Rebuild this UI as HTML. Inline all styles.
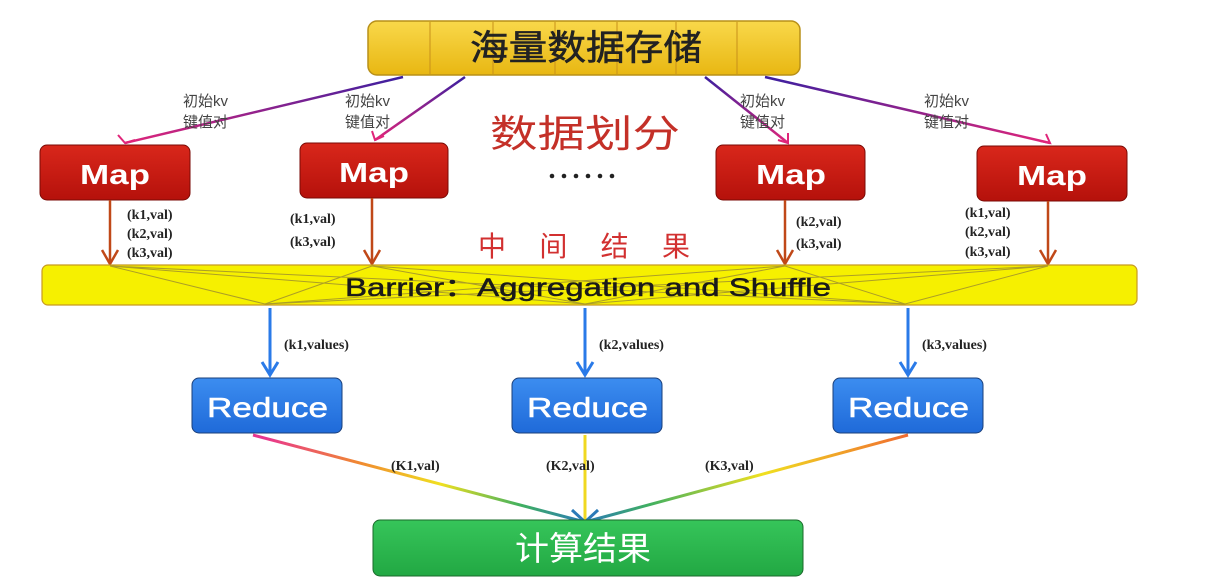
<!DOCTYPE html>
<html><head><meta charset="utf-8"><style>
html,body{margin:0;padding:0;background:#fff;width:1226px;height:588px;overflow:hidden}
text{font-family:"Liberation Sans","Noto Sans CJK SC",sans-serif}
.kv text{font-family:"Liberation Serif",serif;font-weight:bold;font-size:14px;fill:#222}
.lab text{font-size:15px;fill:#444}
</style></head><body>
<svg width="1226" height="588" viewBox="0 0 1226 588" xmlns="http://www.w3.org/2000/svg">
<defs>
<linearGradient id="gold" x1="0" y1="0" x2="0" y2="1"><stop offset="0" stop-color="#f9d84a"/><stop offset="1" stop-color="#e8b712"/></linearGradient>
<linearGradient id="red" x1="0" y1="0" x2="0" y2="1"><stop offset="0" stop-color="#d9271b"/><stop offset="1" stop-color="#b5110b"/></linearGradient>
<linearGradient id="blue" x1="0" y1="0" x2="0" y2="1"><stop offset="0" stop-color="#3c8df0"/><stop offset="1" stop-color="#1f6ad9"/></linearGradient>
<linearGradient id="green" x1="0" y1="0" x2="0" y2="1"><stop offset="0" stop-color="#36c55a"/><stop offset="1" stop-color="#22a843"/></linearGradient>
<linearGradient id="pp" x1="0" y1="0" x2="0" y2="1"><stop offset="0" stop-color="#3b1fa0"/><stop offset="1" stop-color="#e0257a"/></linearGradient>
<linearGradient id="rb1" gradientUnits="userSpaceOnUse" x1="265" y1="435" x2="585" y2="522"><stop offset="0" stop-color="#e8358f"/><stop offset="0.3" stop-color="#f08a30"/><stop offset="0.55" stop-color="#f0e020"/><stop offset="0.8" stop-color="#40b060"/><stop offset="1" stop-color="#2a7ab8"/></linearGradient>
<linearGradient id="rb3" gradientUnits="userSpaceOnUse" x1="908" y1="435" x2="585" y2="522"><stop offset="0" stop-color="#f06a30"/><stop offset="0.45" stop-color="#f0e020"/><stop offset="0.8" stop-color="#40b060"/><stop offset="1" stop-color="#2a7ab8"/></linearGradient>
</defs>

<rect x="368" y="21" width="432" height="54" rx="9" fill="url(#gold)" stroke="#b89018" stroke-width="1.5"/>
<g stroke="#c8901a" stroke-width="1">
<line x1="430" y1="22" x2="430" y2="74"/><line x1="493" y1="22" x2="493" y2="74"/><line x1="555" y1="22" x2="555" y2="74"/><line x1="617" y1="22" x2="617" y2="74"/><line x1="676" y1="22" x2="676" y2="74"/><line x1="737" y1="22" x2="737" y2="74"/>
</g>
<text x="470" y="60" font-size="35" fill="#222" stroke="#222" stroke-width="0.6" textLength="232" lengthAdjust="spacingAndGlyphs">海量数据存储</text>

<g stroke="url(#pp)" stroke-width="2.5" fill="none">
<path d="M403 77 L125 143"/><path d="M465 77 L375 140"/><path d="M705 77 L788 143"/><path d="M765 77 L1050 143"/>
</g>
<g stroke="#e0257a" stroke-width="2" fill="none">
<path d="M118 135 L125 143 L135 140"/><path d="M372 131 L375 140 L384 136"/><path d="M778 140 L788 143 L788 133"/><path d="M1040 141 L1050 143 L1046 134"/>
</g>
<g class="lab">
<text x="183" y="106">初始kv</text><text x="183" y="127">键值对</text>
<text x="345" y="106">初始kv</text><text x="345" y="127">键值对</text>
<text x="740" y="106">初始kv</text><text x="740" y="127">键值对</text>
<text x="924" y="106">初始kv</text><text x="924" y="127">键值对</text>
</g>
<text x="490" y="147" font-size="38" fill="#c43028" textLength="190" lengthAdjust="spacingAndGlyphs">数据划分</text>
<g fill="#222"><circle cx="552" cy="176" r="2.3"/><circle cx="564" cy="176" r="2.3"/><circle cx="576" cy="176" r="2.3"/><circle cx="588" cy="176" r="2.3"/><circle cx="600" cy="176" r="2.3"/><circle cx="612" cy="176" r="2.3"/></g>

<rect x="40" y="145" width="150" height="55" rx="7" fill="url(#red)" stroke="#7a0a05"/>
<rect x="300" y="143" width="148" height="55" rx="7" fill="url(#red)" stroke="#7a0a05"/>
<rect x="716" y="145" width="149" height="55" rx="7" fill="url(#red)" stroke="#7a0a05"/>
<rect x="977" y="146" width="150" height="55" rx="7" fill="url(#red)" stroke="#7a0a05"/>
<g font-size="28" fill="#fff" font-weight="bold">
<text x="80" y="184" textLength="70" lengthAdjust="spacingAndGlyphs">Map</text>
<text x="339" y="182" textLength="70" lengthAdjust="spacingAndGlyphs">Map</text>
<text x="756" y="184" textLength="70" lengthAdjust="spacingAndGlyphs">Map</text>
<text x="1017" y="185" textLength="70" lengthAdjust="spacingAndGlyphs">Map</text>
</g>

<g stroke="#c04818" stroke-width="2.5" fill="none">
<path d="M110 200 V264"/><path d="M102 250 L110 264 L118 250"/>
<path d="M372 198 V264"/><path d="M364 250 L372 264 L380 250"/>
<path d="M785 200 V264"/><path d="M777 250 L785 264 L793 250"/>
<path d="M1048 201 V264"/><path d="M1040 250 L1048 264 L1056 250"/>
</g>
<g class="kv">
<text x="127" y="219">(k1,val)</text><text x="127" y="238">(k2,val)</text><text x="127" y="257">(k3,val)</text>
<text x="290" y="223">(k1,val)</text><text x="290" y="246">(k3,val)</text>
<text x="796" y="226">(k2,val)</text><text x="796" y="248">(k3,val)</text>
<text x="965" y="217">(k1,val)</text><text x="965" y="236">(k2,val)</text><text x="965" y="256">(k3,val)</text>
</g>
<text x="478" y="256" font-size="28" fill="#d23030" textLength="212" lengthAdjust="spacing">中间结果</text>

<rect x="42" y="265" width="1095" height="40" rx="6" fill="#f6f000" stroke="#c89a20" stroke-width="1.2"/>
<g stroke="#9a8a30" stroke-width="1" fill="none" opacity="0.8">
<path d="M110 266 L265 304 M110 266 L585 304 M110 266 L905 304"/>
<path d="M372 266 L265 304 M372 266 L585 304 M372 266 L905 304"/>
<path d="M785 266 L265 304 M785 266 L585 304 M785 266 L905 304"/>
<path d="M1048 266 L265 304 M1048 266 L585 304 M1048 266 L905 304"/>
</g>
<text x="345" y="296" font-size="25" fill="#1a1a1a" stroke="#1a1a1a" stroke-width="0.5" textLength="486" lengthAdjust="spacingAndGlyphs">Barrier：Aggregation and Shuffle</text>

<g stroke="#2a7ae8" stroke-width="3" fill="none">
<path d="M270 308 V374"/><path d="M262 362 L270 375 L278 362"/>
<path d="M585 308 V374"/><path d="M577 362 L585 375 L593 362"/>
<path d="M908 308 V374"/><path d="M900 362 L908 375 L916 362"/>
</g>
<g class="kv">
<text x="284" y="349">(k1,values)</text><text x="599" y="349">(k2,values)</text><text x="922" y="349">(k3,values)</text>
</g>

<rect x="192" y="378" width="150" height="55" rx="7" fill="url(#blue)" stroke="#1a3f7a"/>
<rect x="512" y="378" width="150" height="55" rx="7" fill="url(#blue)" stroke="#1a3f7a"/>
<rect x="833" y="378" width="150" height="55" rx="7" fill="url(#blue)" stroke="#1a3f7a"/>
<g font-size="28" fill="#fff" stroke="#fff" stroke-width="0.5">
<text x="207" y="417" textLength="121" lengthAdjust="spacingAndGlyphs">Reduce</text>
<text x="527" y="417" textLength="121" lengthAdjust="spacingAndGlyphs">Reduce</text>
<text x="848" y="417" textLength="121" lengthAdjust="spacingAndGlyphs">Reduce</text>
</g>

<path d="M253 435 L585 522" stroke="url(#rb1)" stroke-width="3" fill="none"/>
<path d="M908 435 L585 522" stroke="url(#rb3)" stroke-width="3" fill="none"/>
<path d="M585 435 V520" stroke="#f0d820" stroke-width="3" fill="none"/>
<path d="M572 510 L585 522 L598 510" stroke="#2a7ab8" stroke-width="3" fill="none"/>
<g class="kv">
<text x="391" y="470">(K1,val)</text><text x="546" y="470">(K2,val)</text><text x="705" y="470">(K3,val)</text>
</g>

<rect x="373" y="520" width="430" height="56" rx="7" fill="url(#green)" stroke="#1a6a2a"/>
<text x="515" y="560" font-size="33" fill="#fff" textLength="136" lengthAdjust="spacingAndGlyphs">计算结果</text>
</svg>
</body></html>
